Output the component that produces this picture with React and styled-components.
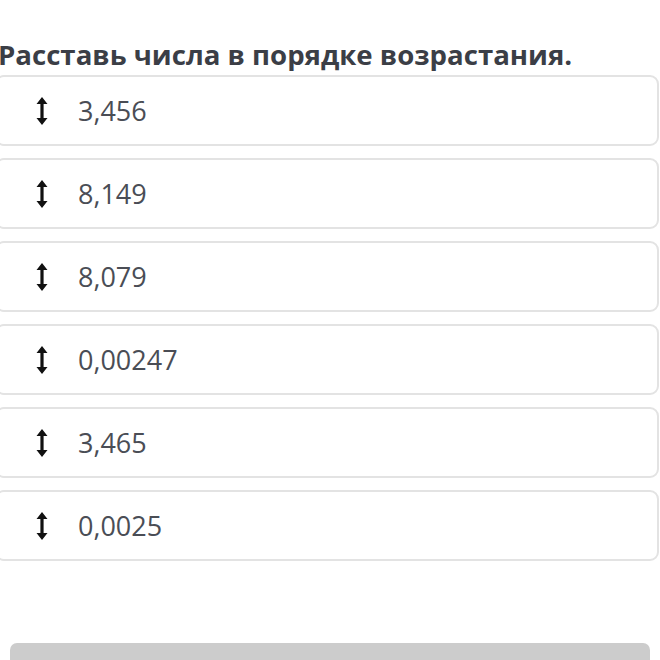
import React from 'react';
import styled, { createGlobalStyle } from 'styled-components';

const GlobalStyle = createGlobalStyle`
  body {
    margin: 0;
    background: #fff;
    font-family: 'Open Sans', 'Noto Sans', sans-serif;
    overflow: hidden;
  }
`;

const items = ['3,456', '8,149', '8,079', '0,00247', '3,465', '0,0025'];

function SortIcon() {
  return (
    <svg width="14" height="30" viewBox="0 0 14 30">
      <path d="M7 1 L12.5 8 L8.6 8 L8.6 22 L12.5 22 L7 29 L1.5 22 L5.4 22 L5.4 8 L1.5 8 Z" fill="#111" />
    </svg>
  );
}

export default function App() {
  return (
    <>
      <GlobalStyle />
      <Page>
        <Heading>Расставь числа в порядке возрастания.</Heading>
        <List>
          {items.map((n, i) => (
            <Card key={i}>
              <Handle>
                <SortIcon />
              </Handle>
              <Value>{n}</Value>
            </Card>
          ))}
        </List>
        <SubmitButton />
      </Page>
    </>
  );
}

const Page = styled.div`
  width: 664px;
  margin-left: -5px;
  padding-top: 35px;
  height: 660px;
  box-sizing: border-box;
`;

const Heading = styled.div`
  font-size: 27.6px;
  font-weight: 700;
  line-height: 38px;
  color: #3b3e46;
  margin: 0 0 2px 3px;
  white-space: nowrap;
`;

const List = styled.div`
  display: flex;
  flex-direction: column;
  gap: 12px;
`;

const Card = styled.div`
  height: 71px;
  box-sizing: border-box;
  border: 2px solid #e3e3e3;
  border-radius: 9px;
  display: flex;
  align-items: center;
  padding-left: 38px;
`;

const Handle = styled.div`
  width: 14px;
  display: flex;
  align-items: center;
  margin-right: 29px;
`;

const Value = styled.div`
  font-size: 27px;
  color: #4a4d55;
  line-height: 1;
`;

const SubmitButton = styled.div`
  margin: 82px 0 0 15px;
  width: 640px;
  height: 60px;
  background: #cccccc;
  border-radius: 7px;
`;
